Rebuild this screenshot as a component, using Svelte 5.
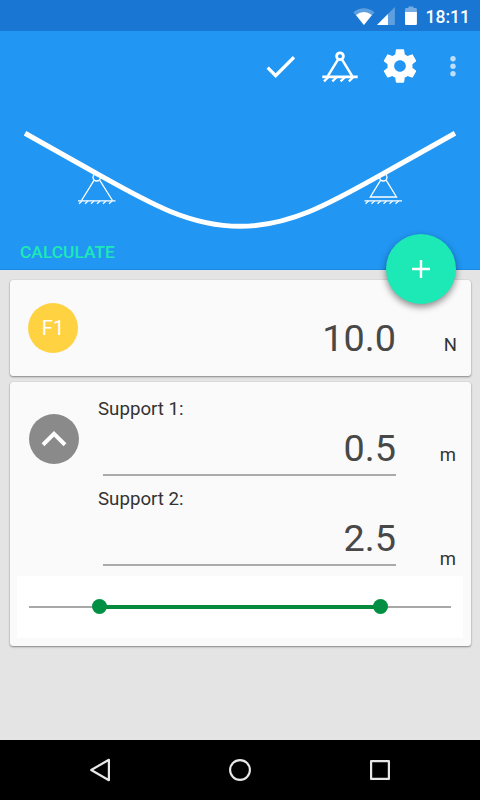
<script>
	let force = $state(10);
	let supports = $state([0.5, 2.5]);
	let expanded = $state(true);

	const beamLength = 3;

	let start = $derived((supports[0] / beamLength) * 100);
	let end = $derived((supports[1] / beamLength) * 100);
</script>

<div class="screen">
	<div class="status-bar">
		<svg width="24" height="20" viewBox="0 0 24 20">
			<path d="M1.3 6.2Q12 -1.8 22.7 6.2L12 19z" fill="#fff" opacity="0.3" />
			<path d="M4 9Q12 2.8 20 9L12 19z" fill="#fff" />
		</svg>
		<svg class="cell" width="20" height="20" viewBox="0 0 20 20">
			<path d="M1 19L19 1V19z" fill="#fff" opacity="0.3" />
			<path d="M1 19L12 8V19z" fill="#fff" />
		</svg>
		<svg class="battery" width="12" height="20" viewBox="0 0 12 20">
			<path d="M0 6V3.5Q0 2 1.5 2H3.5V0.5H8.5V2H10.5Q12 2 12 3.5V6z" fill="#fff" opacity="0.4" />
			<path d="M0 6H12V18Q12 19 11 19H1Q0 19 0 18z" fill="#fff" />
		</svg>
		<span class="clock">18:11</span>
	</div>

	<header class="header">
		<div class="toolbar">
			<button class="action" aria-label="Done">
				<svg width="39" height="39" viewBox="0 0 24 24" fill="#fff">
					<path d="M9 16.17L4.83 12l-1.42 1.41L9 19 21 7l-1.41-1.41z" />
				</svg>
			</button>
			<button class="action" aria-label="Supports">
				<svg width="40" height="40" viewBox="0 0 40 40" fill="none" stroke="#fff" stroke-width="2.5">
					<circle cx="20" cy="10.2" r="3.4" stroke-width="2.8" />
					<path d="M18.2 13.2L7.8 30.2M21.8 13.2L32.2 30.2" />
					<path d="M2.3 30.9H37.7" stroke-width="2.8" />
					<path d="M8.5 31L4 35.3M16.8 31L12.3 35.3M25.1 31L20.6 35.3M33.4 31L28.9 35.3" stroke-width="2.3" />
				</svg>
			</button>
			<button class="action" aria-label="Settings">
				<svg width="40" height="40" viewBox="0 0 24 24" fill="#fff">
					<path d="M19.43 12.98c.04-.32.07-.64.07-.98s-.03-.66-.07-.98l2.11-1.65c.19-.15.24-.42.12-.64l-2-3.46c-.12-.22-.39-.3-.61-.22l-2.49 1c-.52-.4-1.08-.73-1.69-.98l-.38-2.65C14.46 2.18 14.25 2 14 2h-4c-.25 0-.46.18-.49.42l-.38 2.65c-.61.25-1.17.59-1.69.98l-2.49-1c-.23-.09-.49 0-.61.22l-2 3.46c-.13.22-.07.49.12.64l2.11 1.65c-.04.32-.07.65-.07.98s.03.66.07.98l-2.11 1.65c-.19.15-.24.42-.12.64l2 3.46c.12.22.39.3.61.22l2.49-1c.52.4 1.08.73 1.69.98l.38 2.65c.03.24.24.42.49.42h4c.25 0 .46-.18.49-.42l.38-2.65c.61-.25 1.17-.59 1.69-.98l2.49 1c.23.09.49 0 .61-.22l2-3.46c.12-.22.07-.49-.12-.64l-2.11-1.65zM12 15.5c-1.93 0-3.5-1.57-3.5-3.5s1.57-3.5 3.5-3.5 3.5 1.57 3.5 3.5-1.57 3.5-3.5 3.5z" />
				</svg>
			</button>
			<button class="action more" aria-label="More options">
				<svg width="10" height="24" viewBox="0 0 10 24" fill="#fff" opacity="0.7">
					<circle cx="5" cy="4.8" r="2.7" /><circle cx="5" cy="12.2" r="2.7" /><circle cx="5" cy="19.7" r="2.7" />
				</svg>
			</button>
		</div>

		<svg class="beam" width="480" height="136" viewBox="0 101 480 136" fill="none" stroke="#fff">
			<g stroke-width="1.3">
				<circle cx="96.7" cy="177.3" r="3.7" />
				<path d="M94 180.3L81.5 200.5M99.8 180.3L112.5 200.5" />
				<path d="M78 200.8H115.5" />
				<circle cx="383.3" cy="177.3" r="3.7" />
				<path d="M380.5 180.3L370.3 197H396.5L386.3 180.3" />
				<path d="M364.5 200.8H402" />
			</g>
			<g stroke-width="1.2">
				<path d="M82 201l-3 2.7M88 201l-3 2.7M94 201l-3 2.7M100 201l-3 2.7M106 201l-3 2.7M112 201l-3 2.7" />
				<path d="M368.5 201l-3 2.7M374.5 201l-3 2.7M380.5 201l-3 2.7M386.5 201l-3 2.7M392.5 201l-3 2.7M398.5 201l-3 2.7" />
			</g>
			<path d="M25 133.2L97 173.7C150 203.5 190 226.3 240 226.3S330 203.5 383 173.7L455 133.2" stroke-width="5" />
		</svg>

		<button class="calculate">CALCULATE</button>
		<button class="fab" aria-label="Add force">
			<svg width="18" height="18" viewBox="0 0 18 18" stroke="#fff" stroke-width="2.4">
				<path d="M9 0V18M0 9H18" />
			</svg>
		</button>
	</header>

	<main class="content">
		<section class="card force">
			<div class="badge yellow">F1</div>
			<div class="value">{force.toFixed(1)}</div>
			<div class="unit newton">N</div>
		</section>

		<section class="card">
			<div class="supports">
				<button class="badge grey" aria-label="Collapse" onclick={() => (expanded = !expanded)}>
					<svg width="26" height="16" viewBox="0 0 26 16" fill="none" stroke="#fff" stroke-width="4">
						<path d="M2 13.7L13 2.9L24 13.7" />
					</svg>
				</button>
				<div class="fields">
					{#each supports as support, i}
						<div class="field">
							<div class="label">Support {i + 1}:</div>
							<div class="row">
								<div class="value underlined">{support.toFixed(1)}</div>
								<div class="unit" class:low={i === 1}>m</div>
							</div>
						</div>
					{/each}
				</div>
			</div>

			{#if expanded}
				<div class="slider">
					<div class="track">
						<div class="range" style="left: {start}%; width: {end - start}%"></div>
						<div class="thumb" style="left: {start}%"></div>
						<div class="thumb" style="left: {end}%"></div>
					</div>
				</div>
			{/if}
		</section>
	</main>

	<nav class="nav-bar">
		<svg width="24" height="26" viewBox="0 0 24 26" fill="none" stroke="#e8e8e8" stroke-width="2.2" stroke-linejoin="round">
			<path d="M3.2 13L20.9 2.8V23.2z" />
		</svg>
		<svg width="24" height="26" viewBox="0 0 24 26" fill="none" stroke="#e8e8e8" stroke-width="2.1">
			<circle cx="12" cy="13" r="9.9" />
		</svg>
		<svg width="24" height="26" viewBox="0 0 24 26" fill="none" stroke="#e8e8e8" stroke-width="2.2" stroke-linejoin="round">
			<rect x="3.1" y="4.1" width="17.8" height="17.8" />
		</svg>
	</nav>
</div>

<style>
	:global(body) { margin: 0; }
	button { border: none; background: none; padding: 0; font-family: inherit; cursor: pointer; }
	svg { display: block; }

	.screen { width: 480px; height: 800px; display: flex; flex-direction: column; overflow: hidden; background: #e4e4e4; font-family: Roboto, sans-serif; }

	.status-bar { height: 31px; flex: none; box-sizing: border-box; display: flex; align-items: center; padding: 0 10px 0 352px; background: #1976d2; }
	.battery { margin-left: 9px; }
	.clock { margin-left: 9px; padding-top: 2px; color: #fff; font-size: 17.5px; font-weight: 500; line-height: 20px; white-space: nowrap; }

	.header { position: relative; height: 239px; flex: none; background: #2196f3; box-shadow: inset 0 -1px 0 #1a89e4; }
	.toolbar { height: 70px; display: flex; justify-content: flex-end; padding-right: 10px; }
	.action { width: 60px; display: flex; align-items: center; justify-content: center; }
	.action.more { width: 40px; padding-left: 5px; box-sizing: border-box; }
	.calculate { display: block; margin: 4px 0 0 20px; color: #1de9b6; font-size: 17.4px; font-weight: 500; line-height: 22px; }
	.fab { position: absolute; right: 24px; bottom: -33.5px; z-index: 1; width: 70px; height: 70px; border-radius: 50%; display: flex; align-items: center; justify-content: center; background: #1de9b6; box-shadow: 0 3px 7px rgba(0, 0, 0, 0.45); }

	.content { flex: 1; display: flex; flex-direction: column; gap: 6px; padding: 9.5px 9.5px 0; }
	.card { background: #fafafa; border-radius: 3px; box-shadow: 0 1px 2px rgba(0, 0, 0, 0.4), 0 0 1px rgba(0, 0, 0, 0.2); }
	.force { height: 96px; box-sizing: border-box; display: flex; align-items: baseline; padding: 22.5px 13.5px 0 18.5px; }

	.badge { width: 50px; height: 50px; flex: none; border-radius: 50%; display: flex; align-items: center; justify-content: center; color: #fff; font-size: 20px; }
	.yellow { align-self: flex-start; margin-top: 1px; background: #ffd242; }
	.grey { margin-top: 17px; background: #8a8a8a; }

	.value { flex: 1; color: #484848; font-size: 37.8px; line-height: 50px; text-align: right; }
	.force .value { padding-top: 11px; }
	.unit { color: #333; font-size: 18.5px; line-height: 22px; text-align: right; width: 60px; }
	.newton { width: 61px; }

	.supports { display: flex; padding: 15.5px 14.5px 0 19.5px; }
	.fields { flex: 1; display: flex; flex-direction: column; gap: 11px; padding-left: 19px; }
	.label { color: #333; font-size: 18.7px; line-height: 24px; }
	.row { display: flex; align-items: baseline; padding-left: 5px; }
	.underlined { padding: 1.5px 0 1.5px; border-bottom: 2px solid #aaa; }
	.low { align-self: flex-end; margin-bottom: -4px; }

	.slider { margin: 9.5px 7.5px 0; padding: 30px 12px 30px; background: #fff; }
	.card:last-child { padding-bottom: 8px; }
	.track { position: relative; height: 2px; background: #a8a8a8; }
	.range { position: absolute; top: -1px; height: 4px; background: #068a3c; }
	.thumb { position: absolute; top: -6.5px; width: 15px; height: 15px; margin-left: -7.5px; border-radius: 50%; background: #008f43; }

	.nav-bar { height: 60px; flex: none; display: flex; align-items: center; justify-content: center; gap: 116px; background: #000; }
</style>
